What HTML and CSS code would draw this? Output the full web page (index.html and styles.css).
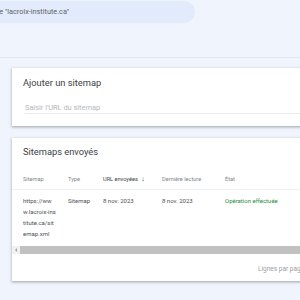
FILE: index.html
```html
<!DOCTYPE html>
<html lang="fr">
<head>
<meta charset="utf-8">
<link rel="stylesheet" href="styles.css">
</head>
<body>
<header class="topbar">
  <div class="search">
    <div class="search-text"><span>Inspecter n'importe quelle URL dans le domaine "lacroix-institute.ca"</span></div>
  </div>
</header>
<main class="content">
  <section class="card add-card">
    <h2 class="card-title">Ajouter un sitemap</h2>
    <div class="field">Saisir l'URL du sitemap</div>
  </section>
  <section class="card list-card">
    <h2 class="card-title">Sitemaps envoyés</h2>
    <div class="table">
      <div class="row head">
        <div>Sitemap</div>
        <div>Type</div>
        <div class="sorted">URL envoyées <span class="arrow">&#8595;</span></div>
        <div>Dernière lecture</div>
        <div>État</div>
      </div>
      <div class="row body">
        <div class="url">https://ww<br>w.lacroix-ins<br>titute.ca/sit<br>emap.xml</div>
        <div>Sitemap</div>
        <div>8 nov. 2023</div>
        <div>8 nov. 2023</div>
        <div class="ok">Opération effectuée</div>
      </div>
    </div>
    <div class="scrollbar"><div class="sb-btn"><span class="sb-arrow"></span></div><div class="sb-thumb"></div></div>
    <div class="footer">Lignes par page</div>
  </section>
</main>
</body>
</html>
```
FILE: styles.css
```css
html, body {
  margin: 0;
  padding: 0;
}
body {
  width: 300px;
  height: 300px;
  overflow: hidden;
  background: #f0f4fc;
  font-family: Roboto, "Liberation Sans", sans-serif;
  color: #3c4043;
}
.topbar {
  height: 56px;
  border-bottom: 1px solid #e3e7ee;
  padding-top: 1px;
  box-sizing: content-box;
}
.search {
  width: 195px;
  height: 22px;
  background: #e2ebfc;
  border-radius: 0 11px 11px 0;
  display: flex;
  align-items: center;
}
.search-text {
  width: 69px;
  display: flex;
  justify-content: flex-end;
  overflow: hidden;
  white-space: nowrap;
  font-size: 7.3px;
  color: #5f6368;
  padding-bottom: 1px;
}
.content {
  padding-top: 10px;
  display: flex;
  flex-direction: column;
  gap: 12px;
}
.card {
  margin-left: 12px;
  width: 300px;
  background: #fff;
  box-shadow: 0 1px 2px rgba(60, 64, 67, .3), 0 1px 3px 1px rgba(60, 64, 67, .12);
}
.card-title {
  margin: 0;
  font-weight: 400;
  font-size: 9.3px;
  line-height: 12px;
  color: #3c4043;
  padding-left: 11px;
}
.add-card {
  height: 58px;
  padding-top: 9px;
  box-sizing: border-box;
}
.field {
  margin: 14px 0 0 13px;
  font-size: 7.4px;
  line-height: 9px;
  color: #b5b8bd;
  padding-bottom: 1px;
  border-bottom: 1px solid #e8eaed;
}
.list-card {
  height: 143px;
  padding-top: 8px;
  box-sizing: border-box;
}
.table {
  margin-top: 12px;
}
.row {
  display: grid;
  grid-template-columns: 45px 35px 59px 63px 1fr;
  padding-left: 11px;
  font-size: 6px;
}
.head {
  height: 20px;
  box-sizing: border-box;
  padding-top: 5px;
  font-size: 5.6px;
  line-height: 8px;
  color: #80868b;
  border-bottom: 1px solid #eef0f2;
}
.head .sorted {
  color: #3c4043;
}
.arrow {
  font-size: 7px;
  margin-left: 2px;
}
.body {
  padding-top: 5px;
  line-height: 11px;
  color: #4d5156;
  height: 56px;
  box-sizing: border-box;
}
.ok {
  color: #1e8e3e;
}
.scrollbar {
  display: flex;
  height: 8px;
  background: #f1f1f1;
}
.sb-btn {
  width: 8px;
  display: flex;
  align-items: center;
  justify-content: center;
}
.sb-arrow {
  width: 0;
  height: 0;
  border-top: 2px solid transparent;
  border-bottom: 2px solid transparent;
  border-right: 2px solid #a3a3a3;
}
.sb-thumb {
  flex: 1;
  background: #c1c1c1;
}
.footer {
  padding: 11px 0 0 246px;
  font-size: 6.5px;
  line-height: 9px;
  color: #9aa0a6;
  white-space: nowrap;
}
```
